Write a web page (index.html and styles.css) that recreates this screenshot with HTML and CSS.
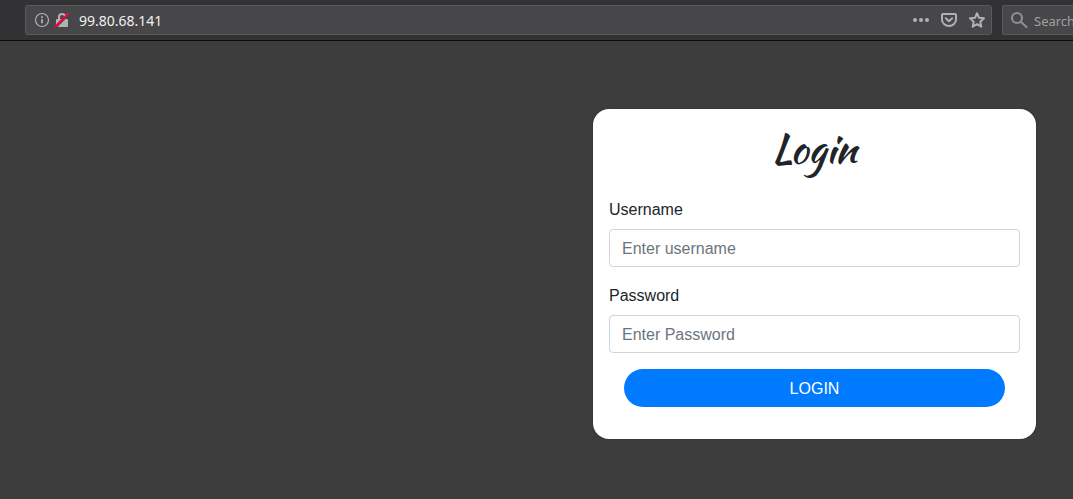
FILE: index.html
```html
<!DOCTYPE html>
<html lang="en">
<head>
<meta charset="utf-8">
<meta name="viewport" content="width=device-width, initial-scale=1">
<title>Login</title>
<link rel="stylesheet" href="styles.css">
</head>
<body>
<header class="toolbar">
  <div class="address-bar">
    <button class="icon-button" type="button" aria-label="Site information">
      <svg width="16" height="16" viewBox="0 0 16 16" fill="none" stroke="#b1b1b3"><circle cx="8" cy="8" r="6.500" stroke-width="1.200"/><path d="M8 7.200v4" stroke-width="1.800"/><path d="M8 4.200v1.800" stroke-width="1.800"/></svg>
    </button>
    <button class="icon-button" type="button" aria-label="Connection is not secure">
      <svg width="16" height="16" viewBox="0 0 16 16"><path d="M5 8V5a3 3 0 0 1 6 0v3" fill="none" stroke="#b1b1b3" stroke-width="2"/><rect x="2" y="7" width="12" height="8" rx="1" fill="#b1b1b3"/><path d="M1.800 15.300 14.800 2.300" stroke="#474749" stroke-width="2"/><path d="M1.500 14.300 14.200 1.600" stroke="#ff0039" stroke-width="2" stroke-linecap="round"/></svg>
    </button>
    <input class="address" type="text" value="99.80.68.141" aria-label="Address">
    <div class="page-actions">
      <button class="icon-button" type="button" aria-label="Page actions">
        <svg width="16" height="16" viewBox="0 0 16 16" fill="#b1b1b3"><circle cx="2" cy="8" r="2"/><circle cx="8" cy="8" r="2"/><circle cx="14" cy="8" r="2"/></svg>
      </button>
      <button class="icon-button" type="button" aria-label="Save to Pocket">
        <svg width="16" height="16" viewBox="0 0 16 16" fill="none" stroke="#b1b1b3" stroke-width="2" stroke-linecap="round" stroke-linejoin="round"><path d="M2 2h12a1 1 0 0 1 1 1v4.500a7 6.500 0 0 1-14 0V3a1 1 0 0 1 1-1z"/><path d="m4.800 6.300 3.200 3 3.200-3"/></svg>
      </button>
      <button class="icon-button" type="button" aria-label="Bookmark this page">
        <svg width="16" height="16" viewBox="0 0 16 16" fill="none" stroke="#b1b1b3" stroke-width="2" stroke-linejoin="round"><path d="m8 1.200 2 4.600 5 .5-3.700 3.400 1 5L8 12.200l-4.300 2.500 1-5L1 6.300l5-.5z"/></svg>
      </button>
    </div>
  </div>
  <div class="search-bar">
    <svg width="18" height="18" viewBox="0 0 18 18" fill="none" stroke="#8f8f91" stroke-width="2.200" stroke-linecap="round"><circle cx="7" cy="7" r="5"/><path d="m11 11 5.500 5"/></svg>
    <input class="search" type="text" placeholder="Search" aria-label="Search">
  </div>
</header>
<main class="page">
  <form class="card">
    <h1 class="title">Login</h1>
    <div class="field">
      <label for="username">Username</label>
      <input class="control" id="username" type="text" placeholder="Enter username">
    </div>
    <div class="field">
      <label for="password">Password</label>
      <input class="control" id="password" type="password" placeholder="Enter Password">
    </div>
    <button class="submit" type="button">LOGIN</button>
  </form>
</main>
</body>
</html>
```
FILE: styles.css
```css
* {
  box-sizing: border-box;
}

body {
  display: flex;
  flex-direction: column;
  min-height: 100vh;
  margin: 0;
  overflow-x: hidden;
  background: #3d3d3d;
  color: #212529;
  font: 16px/26px "Liberation Sans", Arial, sans-serif;
}

.toolbar {
  display: flex;
  gap: 10px;
  padding: 5px 0 5px 25px;
  background: #323234;
  border-bottom: 1px solid #0c0c0d;
}

.address-bar,
.search-bar {
  display: flex;
  align-items: center;
  height: 30px;
  background: #474749;
  border: 1px solid #5a5a5c;
  border-radius: 3px;
}

.address-bar {
  flex: 1;
  gap: 4px;
  padding: 0 6px 0 8px;
}

.search-bar {
  flex: none;
  width: 71px;
  gap: 6px;
  padding-left: 7px;
  border-right: 0;
  border-radius: 3px 0 0 3px;
}

.search-bar svg {
  flex: none;
}

.icon-button {
  display: flex;
  padding: 0;
  background: none;
  border: 0;
}

.address,
.search {
  flex: 1;
  min-width: 0;
  padding: 0;
  background: none;
  border: 0;
  outline: 0;
  color: #f0f0f1;
  font: 14px/20px "Noto Sans", sans-serif;
}

.address {
  margin: 2px 0 0 5px;
}

.search {
  flex: none;
  width: 60px;
  margin-top: 2px;
  font-size: 13px;
}

.search::placeholder {
  color: #a0a0a2;
  opacity: 1;
}

.page-actions {
  display: flex;
  gap: 12px;
}

.page {
  display: flex;
  flex: 1;
  justify-content: flex-end;
  align-items: flex-start;
  padding: 68px 37px 60px;
}

.card {
  display: flex;
  flex-direction: column;
  flex: 0 1 443px;
  padding: 16px 16px 32px;
  background: #fff;
  border-radius: 16px;
  box-shadow: 0 0 2px #2a2a2a;
}

.title {
  margin: 0 0 24px;
  text-align: center;
  font: 400 40px/48px "Kaushan Script", cursive;
}

.field {
  display: flex;
  flex-direction: column;
  gap: 6px;
  margin-bottom: 16px;
}

.control {
  height: 38px;
  padding: 6px 12px 4px;
  background: #fff;
  border: 1px solid #ced4da;
  border-radius: 4px;
  color: #495057;
  font: inherit;
}

.control::placeholder {
  color: #6c757d;
  opacity: 1;
}

.submit {
  height: 38px;
  margin: 0 15px;
  padding: 2px 12px 0;
  background: #007bff;
  border: 0;
  border-radius: 20px;
  color: #fff;
  font: inherit;
}
```
